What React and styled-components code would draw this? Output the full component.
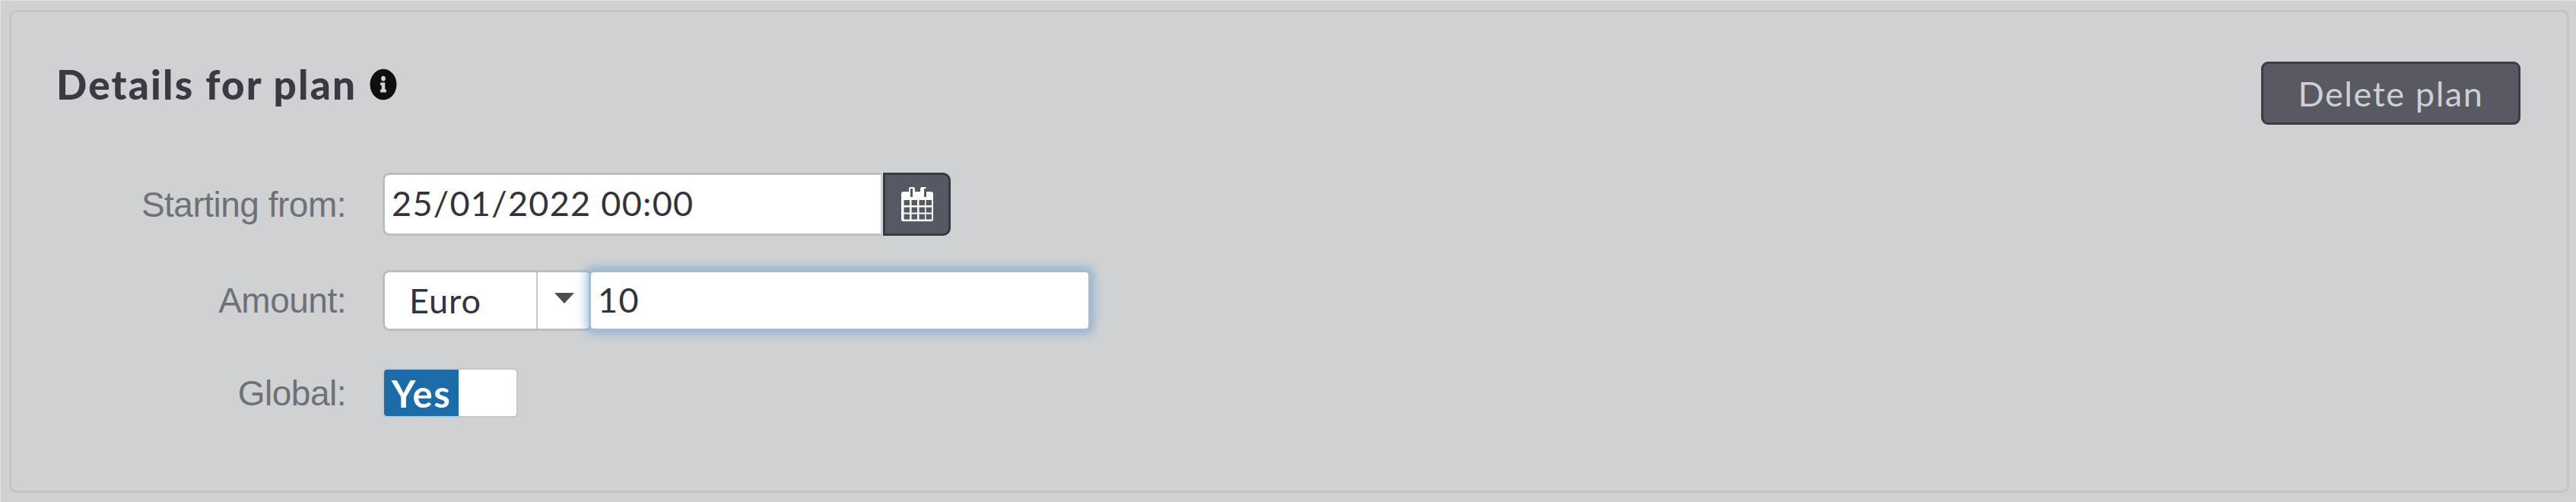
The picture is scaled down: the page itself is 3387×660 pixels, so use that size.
import React from "react";
import styled, { createGlobalStyle } from "styled-components";
import { FaInfoCircle } from "react-icons/fa";

const Global = createGlobalStyle`
  html, body { margin: 0; padding: 0; background: #d0d1d3; }
  #root { height: 660px; }
`;

const Page = styled.div`
  box-sizing: border-box;
  height: 660px;
  padding: 12px 9px 12px 11px;
  border-top: 1px solid #e2e2e3;
  border-left: 1px solid #e2e2e3;
  background: #d0d1d3;
  font-family: "Lato", "Liberation Sans", sans-serif;
`;

const Panel = styled.section`
  box-sizing: border-box;
  height: 635px;
  padding: 65px 61px 0 59px;
  border: 3px solid #c3c4c6;
  border-radius: 9px;
`;

const Header = styled.header`
  display: flex;
  justify-content: space-between;
  align-items: flex-start;
  height: 146px;
`;

const Title = styled.h2`
  display: flex;
  align-items: center;
  gap: 17px;
  margin: 0;
  padding-top: 1px;
  font-size: 53px;
  line-height: 58px;
  font-weight: 900;
  letter-spacing: 2.2px;
  color: #393a44;
`;

const Info = styled(FaInfoCircle).attrs({ preserveAspectRatio: "none" })`
  width: 36px;
  height: 42px;
  color: #0d0e0f;
`;

const DangerButton = styled.button`
  box-sizing: border-box;
  width: 341px;
  height: 83px;
  border: 3px solid #3b3c48;
  border-radius: 9px;
  background: #585962;
  color: #cfd0d2;
  font-family: inherit;
  font-size: 45px;
  letter-spacing: 1.6px;
`;

const Form = styled.div`
  display: flex;
  flex-direction: column;
`;

const Row = styled.div`
  display: flex;
  align-items: center;
  height: ${(p) => p.$height}px;
  margin-bottom: ${(p) => p.$gap}px;
`;

const Label = styled.label`
  width: 381px;
  margin-right: 48px;
  text-align: right;
  font-family: "Liberation Sans", Arial, sans-serif;
  font-size: 46px;
  letter-spacing: -0.5px;
  color: #6f7179;
`;

const Field = styled.div`
  box-sizing: border-box;
  display: flex;
  align-items: center;
  width: ${(p) => p.$width}px;
  height: 100%;
  padding-left: ${(p) => p.$pad}px;
  padding-bottom: 3px;
  background: #fff;
  border: 3px solid #bcbdbf;
  border-radius: ${(p) => p.$radius};
  color: #32333d;
  font-size: 45px;
  letter-spacing: 1.3px;
`;

const DateField = styled(Field)`
  border-right: 0;
`;

const FocusField = styled(Field)`
  margin-left: -5px;
  border-color: #a4bdd4;
  box-shadow: 0 0 12px 4px rgba(95, 155, 210, 0.55);
  position: relative;
`;

const CalendarButton = styled.button`
  box-sizing: border-box;
  display: flex;
  align-items: center;
  justify-content: center;
  width: 89px;
  height: 100%;
  margin-left: 3px;
  padding: 0;
  background: #565863;
  border: 3px solid #373945;
  border-radius: 0 10px 10px 0;
`;

const Select = styled.div`
  box-sizing: border-box;
  display: flex;
  align-items: stretch;
  width: 276px;
  height: 100%;
  background: #fff;
  border: 3px solid #bcbdbf;
  border-radius: 9px;
  color: #32333d;
  font-size: 45px;
  letter-spacing: 1px;
`;

const SelectValue = styled.span`
  display: flex;
  align-items: center;
  width: 201px;
  padding-left: 32px;
  box-sizing: border-box;
  border-right: 2px solid #c9cacc;
`;

const SelectCaret = styled.span`
  flex: 1;
  display: flex;
  justify-content: center;
  align-items: center;
  padding-bottom: 6px;
  &::before {
    content: "";
    border-left: 13px solid transparent;
    border-right: 13px solid transparent;
    border-top: 14px solid #4c4d50;
  }
`;

const Toggle = styled.div`
  box-sizing: border-box;
  display: flex;
  width: 178px;
  height: 65px;
  background: #fff;
  border: 2px solid #c6c7c9;
  border-radius: 6px;
  overflow: hidden;
`;

const ToggleOn = styled.span`
  display: flex;
  align-items: center;
  justify-content: center;
  width: 98px;
  background: #1b6ca8;
  color: #fff;
  font-size: 49px;
  font-weight: 700;
  letter-spacing: 1.5px;
`;

const CalendarIcon = () => (
  <svg width="42" height="46" viewBox="0 0 42 46" aria-hidden="true">
    <path
      fill="#fff"
      d="M3 6h7V3a4 4 0 0 1 8 0v3h7V3a4 4 0 0 1 8 0v3h6a3 3 0 0 1 3 3v33a3 3 0 0 1-3 3H3a3 3 0 0 1-3-3V9a3 3 0 0 1 3-3z"
    />
    <rect x="12" y="2" width="3" height="11" fill="#565863" />
    <rect x="30" y="2" width="3" height="11" fill="#565863" />
    {[17, 26.5, 35.5].map((y) =>
      [3.5, 13.5, 23.5, 32.5].map((x) => (
        <rect key={`${x}-${y}`} x={x} y={y} width={7.5} height={7} fill="#565863" />
      ))
    )}
  </svg>
);

export default function App() {
  return (
    <>
      <Global />
      <Page>
        <Panel>
          <Header>
            <Title>
              Details for plan <Info />
            </Title>
            <DangerButton>Delete plan</DangerButton>
          </Header>
          <Form>
            <Row $height={83} $gap={45}>
              <Label>Starting from:</Label>
              <DateField $width={655} $pad={9} $radius="9px 0 0 9px">25/01/2022 00:00</DateField>
              <CalendarButton>
                <CalendarIcon />
              </CalendarButton>
            </Row>
            <Row $height={80} $gap={49}>
              <Label>Amount:</Label>
              <Select>
                <SelectValue>Euro</SelectValue>
                <SelectCaret />
              </Select>
              <FocusField $width={660} $pad={9} $radius="7px">10</FocusField>
            </Row>
            <Row $height={65} $gap={0}>
              <Label>Global:</Label>
              <Toggle>
                <ToggleOn>Yes</ToggleOn>
              </Toggle>
            </Row>
          </Form>
        </Panel>
      </Page>
    </>
  );
}
